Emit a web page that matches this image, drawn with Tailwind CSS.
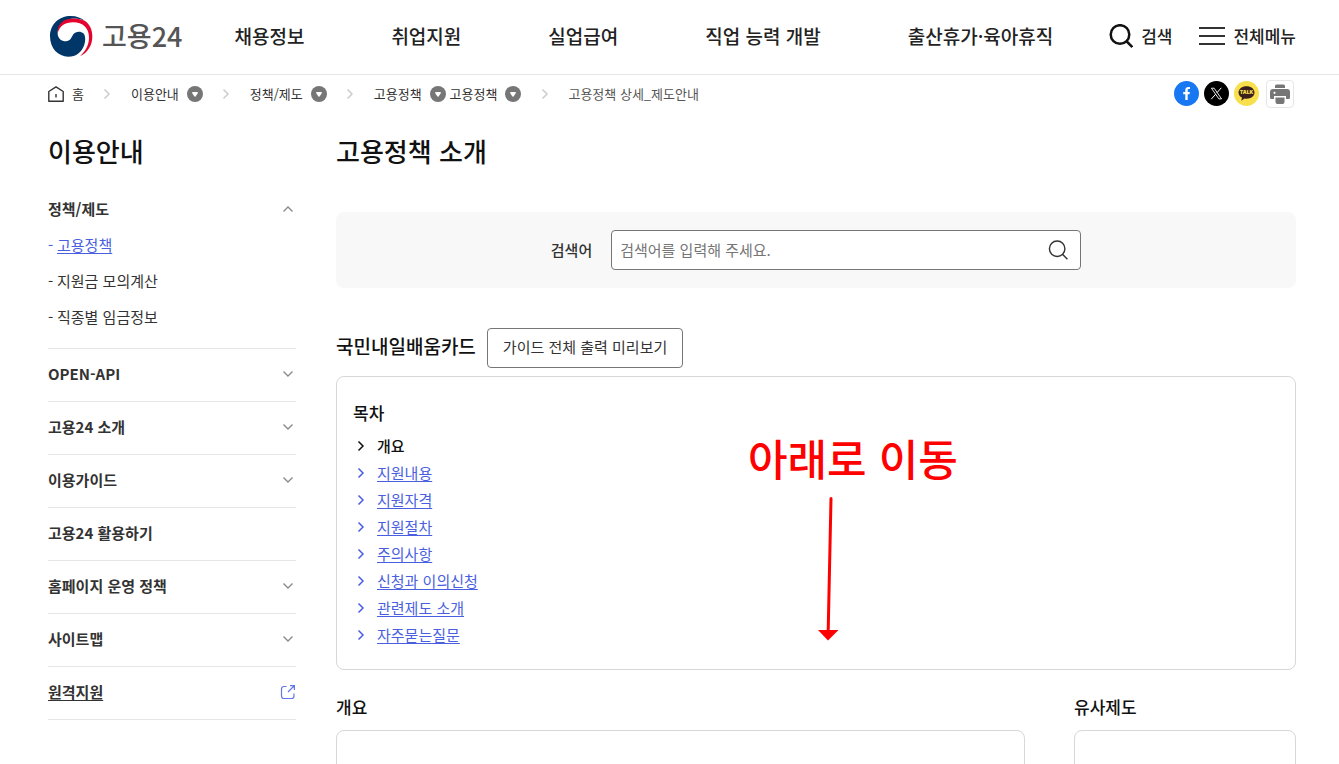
<!DOCTYPE html>
<html lang="ko">

<head>
    <meta charset="UTF-8">
    <meta name="viewport" content="width=device-width, initial-scale=1.0">
    <title>고용24 - 고용정책 소개</title>
    <script src="https://cdn.jsdelivr.net/npm/@tailwindcss/browser@4"></script>
</head>

<body class="bg-white font-['Noto_Sans_CJK_KR',sans-serif] text-[15px] leading-6 text-[#333]">
    <!-- shared icons -->
    <svg class="hidden">
        <symbol id="chevron-right" viewBox="0 0 8 12">
            <path d="M1.5 1.5L6 6l-4.5 4.5" fill="none" stroke="currentColor" stroke-width="1.5" />
        </symbol>
        <symbol id="chevron-down" viewBox="0 0 12 8">
            <path d="M1.5 1.5L6 6l4.5-4.5" fill="none" stroke="currentColor" stroke-width="1.4" />
        </symbol>
        <symbol id="drop" viewBox="0 0 16 16">
            <circle cx="8" cy="8" r="8" fill="#767676" />
            <path d="M5.8 6.8h4.4L8 10z" fill="#fff" stroke="#fff" stroke-width="1.4" stroke-linejoin="round" />
        </symbol>
        <symbol id="search" viewBox="0 0 24 24">
            <circle cx="11" cy="10.5" r="9.3" fill="none" stroke="currentColor" />
            <path d="M17.3 17l6 6" fill="none" stroke="currentColor" />
        </symbol>
    </svg>

    <!-- header -->
    <header class="border-b border-[#e6e6e6] pl-12 pr-[43px]">
        <div class="flex h-[74px] items-center pb-[2px]">
            <a href="#" class="flex items-center gap-2 text-[#555]">
                <svg class="h-[44px] w-[46px]" viewBox="54 42 138 132">
                    <path d="M115 170C84 170 60 145 60 109C60 72 88 48 122 48C140 48 155 54 165 63C150 55 130 53 112 60C92 68 82 84 83 102C84 116 95 124 107 124C122 124 124 112 130 103C136 94 152 92 160 100C167 108 167 122 163 134C156 156 138 170 115 170Z" fill="#003668" />
                    <path d="M83 100C81 80 93 63 112 58C130 53 150 55 165 63C180 73 187 90 187 110C187 135 173 158 150 169C166 154 177 136 177 112C177 84 158 67 130 67C105 67 88 78 83 100Z" fill="#e4032e" />
                </svg>
                <span class="text-[27px] font-medium">고용24</span>
            </a>
            <nav class="ml-[52px] flex gap-[87px] text-[19px] font-medium text-[#222]">
                <a href="#">채용정보</a>
                <a href="#">취업지원</a>
                <a href="#">실업급여</a>
                <a href="#">직업 능력 개발</a>
                <a href="#">출산휴가·육아휴직</a>
            </nav>
            <div class="ml-auto flex gap-[27px] text-[17px] font-medium text-[#222]">
                <button class="flex items-center gap-2">
                    <svg class="size-6 stroke-[2.5] text-[#111]"><use href="#search" /></svg>검색
                </button>
                <button class="flex items-center gap-2">
                    <svg class="h-5 w-[26px]" viewBox="0 0 26 20"><path d="M0 2h26M0 10h26M0 18h26" stroke="#333" stroke-width="2" /></svg>전체메뉴
                </button>
            </div>
        </div>
    </header>

    <div class="pl-12 pr-[43px]">
        <!-- breadcrumb -->
        <div class="flex h-[37px] items-center justify-between pr-[2px]">
            <ol class="flex items-center text-[13px]">
                <li>
                    <a href="#" class="flex items-center gap-2">
                        <svg class="size-4" viewBox="0 0 16 16" fill="none" stroke="#333" stroke-width="1.4"><path d="M.8 5.5L8 .9l7.2 4.6v9.700H.8zM8 8v3.500" stroke-linejoin="round" /></svg>홈
                    </a>
                </li>
                <li class="flex w-[47px] justify-center text-[#ccc]"><svg class="h-3 w-2"><use href="#chevron-right" /></svg></li>
                <li class="flex items-center gap-2">
                    <a href="#">이용안내</a>
                    <button aria-label="이용안내 목록" class="flex"><svg class="size-4"><use href="#drop" /></svg></button>
                </li>
                <li class="flex w-[47px] justify-center text-[#ccc]"><svg class="h-3 w-2"><use href="#chevron-right" /></svg></li>
                <li class="flex items-center gap-2">
                    <a href="#">정책/제도</a>
                    <button aria-label="정책/제도 목록" class="flex"><svg class="size-4"><use href="#drop" /></svg></button>
                </li>
                <li class="flex w-[47px] justify-center text-[#ccc]"><svg class="h-3 w-2"><use href="#chevron-right" /></svg></li>
                <li class="flex items-center gap-2">
                    <a href="#">고용정책</a>
                    <button aria-label="고용정책 목록" class="flex"><svg class="size-4"><use href="#drop" /></svg></button>
                </li>
                <li class="ml-1 flex items-center gap-2">
                    <a href="#">고용정책</a>
                    <button aria-label="고용정책 하위 목록" class="flex"><svg class="size-4"><use href="#drop" /></svg></button>
                </li>
                <li class="flex w-[47px] justify-center text-[#ccc]"><svg class="h-3 w-2"><use href="#chevron-right" /></svg></li>
                <li class="text-[#555]">고용정책 상세_제도안내</li>
            </ol>
            <div class="flex items-center gap-[5px]">
                <a href="#" aria-label="페이스북">
                    <svg class="size-[25px]" viewBox="0 0 25 25"><circle cx="12.5" cy="12.5" r="12.5" fill="#1877f2" /><path d="M11.3 19v-5.7H9.200v-2.400h2.100V9.200c0-2.100 1.200-3.200 3.100-3.200.7 0 1.300.1 1.600.1v2h-1.100c-1 0-1.200.5-1.200 1.300v1.500h2.200l-.4 2.400h-1.800V19z" fill="#fff" /></svg>
                </a>
                <a href="#" aria-label="X">
                    <svg class="size-[25px]" viewBox="0 0 25 25" fill="none" stroke="#fff"><circle cx="12.5" cy="12.5" r="12.5" fill="#000" stroke="none" /><path d="M7.4 7.200h2.700l7.500 10.700h-2.700z" stroke-width=".9" /><path d="M17.300 6.800l-4.400 5M11.700 13.200l-4.500 5" stroke-width="1" /></svg>
                </a>
                <a href="#" aria-label="카카오톡">
                    <svg class="size-[25px]" viewBox="0 0 25 25"><circle cx="12.5" cy="12.5" r="12.5" fill="#f7e04b" /><path d="M12.500 5.300c4.500 0 8 2.700 8 6.200s-3.500 6.200-8 6.200c-.7 0-1.400-.1-2-.2L7.300 19.800l.7-3.200c-2.200-1.100-3.500-2.900-3.500-5.100 0-3.500 3.500-6.200 8-6.200z" fill="#3b1e1e" /><text x="12.5" y="13.3" text-anchor="middle" font-size="5" font-weight="900" font-family="Inter, sans-serif" fill="#f7e04b">TALK</text></svg>
                </a>
                <button aria-label="인쇄" class="ml-[2px] flex size-7 items-center justify-center rounded border border-[#e6e6e6]">
                    <svg class="size-5" viewBox="0 0 20 20" fill="#767676"><path d="M5 4V2q0-1.500 1.500-1.500h7Q15 .5 15 2v2zM3 5h14q3 0 3 3v5.500q0 1.500-1.500 1.500H16v-3H4v3H1.500Q0 15 0 13.500V8q0-3 3-3z" /><path d="M5.500 13.500h9V18q0 2-2 2h-5q-2 0-2-2z" /><circle cx="4.500" cy="8.800" r="1.100" fill="#fff" /></svg>
                </button>
            </div>
        </div>

        <div class="flex gap-10 pt-[19px]">
            <!-- side menu -->
            <aside class="w-[248px] shrink-0">
                <h2 class="text-[26px] font-medium leading-10 text-[#111]">이용안내</h2>
                <ul class="mt-5 font-bold">
                    <li class="border-b border-[#e6e6e6] pb-[13px]">
                        <button class="flex h-9 w-full items-center justify-between pr-[2px]">정책/제도<svg class="h-2 w-3 rotate-180 text-[#8a8a8a]"><use href="#chevron-down" /></svg></button>
                        <ul class="font-normal leading-9">
                            <li class="flex text-[#4a5fe0]"><span class="w-[9px]">-</span><a href="#" class="underline underline-offset-2">고용정책</a></li>
                            <li class="flex"><span class="w-[9px]">-</span><a href="#">지원금 모의계산</a></li>
                            <li class="flex"><span class="w-[9px]">-</span><a href="#">직종별 임금정보</a></li>
                        </ul>
                    </li>
                    <li class="border-b border-[#e6e6e6]">
                        <button class="flex h-[52px] w-full items-center justify-between pb-[2px] pr-[2px]">OPEN-API<svg class="h-2 w-3 text-[#8a8a8a]"><use href="#chevron-down" /></svg></button>
                    </li>
                    <li class="border-b border-[#e6e6e6]">
                        <button class="flex h-[52px] w-full items-center justify-between pb-[2px] pr-[2px]">고용24 소개<svg class="h-2 w-3 text-[#8a8a8a]"><use href="#chevron-down" /></svg></button>
                    </li>
                    <li class="border-b border-[#e6e6e6]">
                        <button class="flex h-[52px] w-full items-center justify-between pb-[2px] pr-[2px]">이용가이드<svg class="h-2 w-3 text-[#8a8a8a]"><use href="#chevron-down" /></svg></button>
                    </li>
                    <li class="border-b border-[#e6e6e6]">
                        <a href="#" class="flex h-[52px] items-center pb-[2px]">고용24 활용하기</a>
                    </li>
                    <li class="border-b border-[#e6e6e6]">
                        <button class="flex h-[52px] w-full items-center justify-between pb-[2px] pr-[2px]">홈페이지 운영 정책<svg class="h-2 w-3 text-[#8a8a8a]"><use href="#chevron-down" /></svg></button>
                    </li>
                    <li class="border-b border-[#e6e6e6]">
                        <button class="flex h-[52px] w-full items-center justify-between pb-[2px] pr-[2px]">사이트맵<svg class="h-2 w-3 text-[#8a8a8a]"><use href="#chevron-down" /></svg></button>
                    </li>
                    <li class="border-b border-[#e6e6e6]">
                        <a href="#" class="flex h-[52px] items-center justify-between pb-[2px] underline underline-offset-2">원격지원
                            <svg class="size-4" viewBox="0 0 16 16" fill="none" stroke="#6475e8" stroke-width="1.2"><path d="M6.500 2.500H4Q1.500 2.500 1.500 5v7q0 2.500 2.500 2.500h7.500q2.500 0 2.500-2.500V9.500M8 8l6-6M10 1.600h4.400V6" /></svg>
                        </a>
                    </li>
                </ul>
            </aside>

            <!-- content -->
            <main class="min-w-0 flex-1">
                <h1 class="text-[26px] font-medium leading-10 text-[#111]">고용정책 소개</h1>

                <form class="mt-[41px] flex items-center justify-center gap-[19px] rounded-lg bg-[#f8f8f8] py-[18px]">
                    <label for="keyword" class="font-medium">검색어</label>
                    <div class="flex h-10 w-[470px] items-center rounded border border-[#767676] bg-white pl-2 pr-3">
                        <input id="keyword" type="text" placeholder="검색어를 입력해 주세요." class="min-w-0 flex-1 outline-none placeholder:text-[#767676]">
                        <button aria-label="검색" class="flex"><svg class="size-5 stroke-[1.7]"><use href="#search" /></svg></button>
                    </div>
                </form>

                <div class="mt-10 flex items-center gap-[11px]">
                    <h2 class="pb-1 text-[19px] font-medium text-[#111]">국민내일배움카드</h2>
                    <button class="h-10 rounded border border-[#767676] px-[15px] pb-[2px]">가이드 전체 출력 미리보기</button>
                </div>

                <section class="relative mt-2 rounded-lg border border-[#d8d8d8] px-4 pb-[21px] pt-[22px] leading-[27px]">
                    <h3 class="text-[17px] font-medium text-[#111]">목차</h3>
                    <ul class="mt-[6px] text-[#4a5fe0]">
                        <li class="flex items-center gap-3 pl-1 font-medium text-[#111]"><svg class="h-3 w-2"><use href="#chevron-right" /></svg>개요</li>
                        <li class="flex items-center gap-3 pl-1"><svg class="h-3 w-2"><use href="#chevron-right" /></svg><a href="#" class="underline underline-offset-2">지원내용</a></li>
                        <li class="flex items-center gap-3 pl-1"><svg class="h-3 w-2"><use href="#chevron-right" /></svg><a href="#" class="underline underline-offset-2">지원자격</a></li>
                        <li class="flex items-center gap-3 pl-1"><svg class="h-3 w-2"><use href="#chevron-right" /></svg><a href="#" class="underline underline-offset-2">지원절차</a></li>
                        <li class="flex items-center gap-3 pl-1"><svg class="h-3 w-2"><use href="#chevron-right" /></svg><a href="#" class="underline underline-offset-2">주의사항</a></li>
                        <li class="flex items-center gap-3 pl-1"><svg class="h-3 w-2"><use href="#chevron-right" /></svg><a href="#" class="underline underline-offset-2">신청과 이의신청</a></li>
                        <li class="flex items-center gap-3 pl-1"><svg class="h-3 w-2"><use href="#chevron-right" /></svg><a href="#" class="underline underline-offset-2">관련제도 소개</a></li>
                        <li class="flex items-center gap-3 pl-1"><svg class="h-3 w-2"><use href="#chevron-right" /></svg><a href="#" class="underline underline-offset-2">자주묻는질문</a></li>
                    </ul>
                    <!-- note laid over the list box -->
                    <div class="absolute left-[411px] top-[58px] text-[#f00]">
                        <p class="text-[43px] font-medium leading-[44px]">아래로 이동</p>
                        <svg class="ml-[69px] mt-[18px] h-[144px] w-6" viewBox="0 0 24 144"><path d="M14 1.5L11.2 134" stroke="currentColor" stroke-width="3" stroke-linecap="round" /><path d="M1 133h20.500L11 143.500z" fill="currentColor" /></svg>
                    </div>
                </section>

                <div class="mt-[23px] grid grid-cols-[1fr_222px] gap-[49px] text-[#111]">
                    <section>
                        <h3 class="text-[17px] font-medium leading-[27px]">개요</h3>
                        <div class="mt-[10px] h-24 rounded-lg border border-[#d8d8d8]"></div>
                    </section>
                    <section>
                        <h3 class="text-[17px] font-medium leading-[27px]">유사제도</h3>
                        <div class="mt-[10px] h-24 rounded-lg border border-[#d8d8d8]"></div>
                    </section>
                </div>
            </main>
        </div>
    </div>
</body>

</html>
